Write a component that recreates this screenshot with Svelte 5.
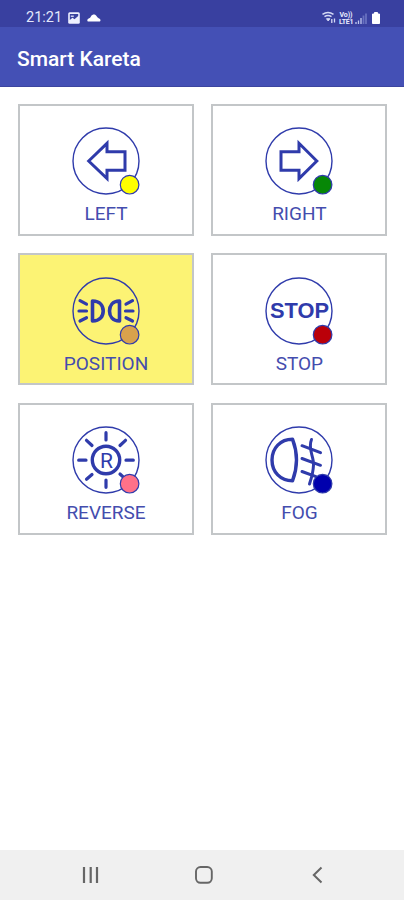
<script>
  const lights = [
    { id: 'left', label: 'LEFT', dot: '#ffff00' },
    { id: 'right', label: 'RIGHT', dot: '#068706' },
    { id: 'position', label: 'POSITION', dot: '#d9a24c' },
    { id: 'stop', label: 'STOP', dot: '#ba0009' },
    { id: 'reverse', label: 'REVERSE', dot: '#ff7189' },
    { id: 'fog', label: 'FOG', dot: '#0000ad' }
  ];
  let active = $state('position');
</script>

<div class="screen">
  <div class="status">
    <span class="time">21:21</span>
    <svg class="photo" width="12" height="12" viewBox="0 0 12 12">
      <rect x="0.2" y="0.2" width="11.6" height="11.6" rx="1.5" fill="#eef0ff" />
      <path d="M1.800 2h8.400v2L6.500 7.200 4.500 5.800 1.800 8z" fill="#3a43a0" />
      <path d="M2.800 4.200h3" stroke="#eef0ff" stroke-width="1.2" />
    </svg>
    <svg class="cloud" width="14" height="9" viewBox="0 0 14 9">
      <path d="M1.500 8.500C-.2 8.500 0 6.200 1.800 5.600 3.300 5 3.500 4 4.200 3 5.500 1 8 1 9.300 2.800c.8 1.200 1.200 2 2.700 2.600 2 .7 1.900 3.100.2 3.100z" fill="#fff" />
    </svg>
    <svg class="signals" width="60" height="16" viewBox="0 0 60 16">
      <g fill="none" stroke="#d5daf5" stroke-width="1.5">
        <path d="M.5 4.300Q6 .5 11.500 4.300M2.500 6.700Q6 4.200 9.500 6.700" />
        <path d="M4.500 8.700h3.400L6.200 11z" fill="#d5daf5" stroke-width="1" />
        <path d="M9.800 9v4M12.500 8.500v4" stroke-width="1.300" />
      </g>
      <g fill="#e8eaff" font-family="Roboto, sans-serif" font-weight="700">
        <text x="17.500" y="7.200" font-size="7" textLength="13">Vo))</text>
        <text x="17" y="14" font-size="7" textLength="14.500">LTE1</text>
      </g>
      <path d="M34 14v-2M36.500 14V10.500M39 14V8" stroke="#c1c8ee" stroke-width="1.300" />
      <path d="M41.500 14V5.500M44 14V3.500" stroke="#6871bf" stroke-width="1.800" />
      <path d="M50.500 4h2V2.500h3v1.500h2V13.500h-7z" fill="#fff" stroke="#fff" />
    </svg>
  </div>
  <header>Smart Kareta</header>

  <main>
    {#each lights as light (light.id)}
      <button class:active={active === light.id} onclick={() => (active = light.id)}>
        <svg class="icon" width="70" height="70" viewBox="-35 -35 70 70">
          <circle r="33" stroke-width="1.4" />
          {#if light.id === 'left'}
            <path d="M-17.300 0 1-17.700V-9.300H19V9.300H1V17.600z" stroke-width="3" />
          {:else if light.id === 'right'}
            <path d="M17.800 0 0-17.700V-9.300H-18V9.300H0V17.600z" stroke-width="3" />
          {:else if light.id === 'position'}
            <path d="M-13.500-10V10C-5.800 10-2.800 5-2.800 0s-3-10-10.700-10zM13.500-10V10C6.500 10 3.500 5 3.500 0s3-10 10-10z" stroke-width="3.600" stroke-linejoin="round" />
            <path d="M-26-10.300l6.500 3.500M-27 0h7.500M-26 10l6.500-3.300M26.500-10.300L20-6.800M27 0H19.500M26.500 10L20 6.700" stroke-width="3.200" stroke-linecap="round" />
          {:else if light.id === 'stop'}
            <text class="stop" x="0.500" y="7.300" textLength="59" lengthAdjust="spacingAndGlyphs">STOP</text>
          {:else if light.id === 'reverse'}
            <circle r="13.700" stroke-width="3.400" />
            <text class="r" x="0.500" y="7.500">R</text>
            <path d="M0-20v-7.300M0 20v7.300M-20 0.200h-7.300M20 0.200h7.300M-14-14.500l-5.500-5.200M14-14.500l5.500-5.200M-14 14.500l-5.500 4.800M14 14l5.500 5.200" stroke-width="3.200" stroke-linecap="round" />
          {:else}
            <path d="M-6.500-20.800C-18.500-20.800-27-12-27 0s8.500 20.800 20.500 20.800C-1.200 7-1.200-7-6.500-20.800z" stroke-width="3.400" stroke-linejoin="round" />
            <path d="M12.500-20.500C8.500-11 15-4 14.500 5c-.3 8-2 13-4 19M3-14.300l18.500 7M3-1.500l18.500 6.800M3 11.500l14 5.200" stroke-width="3" stroke-linecap="round" />
          {/if}
          <circle cx="23.600" cy="23.700" r="9.300" stroke-width="1.200" style:fill={light.dot} />
        </svg>
        <span class="label">{light.label}</span>
      </button>
    {/each}
  </main>

  <nav>
    <svg width="24" height="24" viewBox="0 0 24 24"><path d="M5 4v16M11.700 4v16M18 4v16" stroke-width="2.200" /></svg>
    <svg width="24" height="24" viewBox="0 0 24 24"><rect x="4" y="4" width="15.800" height="15.800" rx="4.500" stroke-width="1.900" /></svg>
    <svg width="24" height="24" viewBox="0 0 24 24"><path d="M16.500 4.500 8.800 12l7.700 7.500" stroke-width="2" /></svg>
  </nav>
</div>

<style>
  :global(body) {
    margin: 0;
  }
  .screen {
    height: 900px;
    display: flex;
    flex-direction: column;
    background: #fff;
    font-family: Roboto, 'Liberation Sans', sans-serif;
    overflow: hidden;
  }
  .status {
    height: 27px;
    flex: none;
    box-sizing: border-box;
    display: flex;
    align-items: center;
    padding: 8px 22px 0 26px;
    background: #3940a0;
    color: #e4e8fc;
  }
  .time {
    font-size: 14.500px;
    line-height: 18px;
    width: 42px;
    padding-top: 1px;
  }
  .cloud {
    margin-left: 7px;
  }
  .signals {
    margin-left: auto;
  }
  header {
    height: 60px;
    flex: none;
    box-sizing: border-box;
    padding: 4px 0 0 17px;
    display: flex;
    align-items: center;
    background: #4450b5;
    border-bottom: 1px solid #3c459f;
    color: #fff;
    font-size: 21px;
    font-weight: 500;
  }
  main {
    flex: 1;
    display: grid;
    grid-template-columns: 176px 176px;
    grid-auto-rows: 132px;
    align-content: start;
    gap: 17.300px 17.400px;
    padding: 17.100px 0 0 18px;
  }
  button {
    display: flex;
    flex-direction: column;
    align-items: center;
    border: 2px solid #c3c6c8;
    background: #fff;
    padding: 20.400px 0 0;
    margin: 0;
    font-family: inherit;
    color: #444dae;
  }
  button.active {
    background: #fcf374;
  }
  .icon {
    flex: none;
    fill: none;
    stroke: #2f3bab;
  }
  .icon text {
    fill: #2f3bab;
    stroke: none;
    text-anchor: middle;
  }
  .stop {
    font: 700 21.500px 'Liberation Sans', sans-serif;
  }
  .r {
    font: 400 21px Roboto, sans-serif;
  }
  .label {
    font-size: 19px;
    line-height: 22px;
    margin-top: 7px;
  }
  nav {
    height: 50px;
    flex: none;
    background: #f0f0f0;
    display: flex;
    align-items: center;
    justify-content: space-between;
    padding: 0 75px 0 79px;
  }
  nav svg {
    fill: none;
    stroke: #666;
  }
</style>
